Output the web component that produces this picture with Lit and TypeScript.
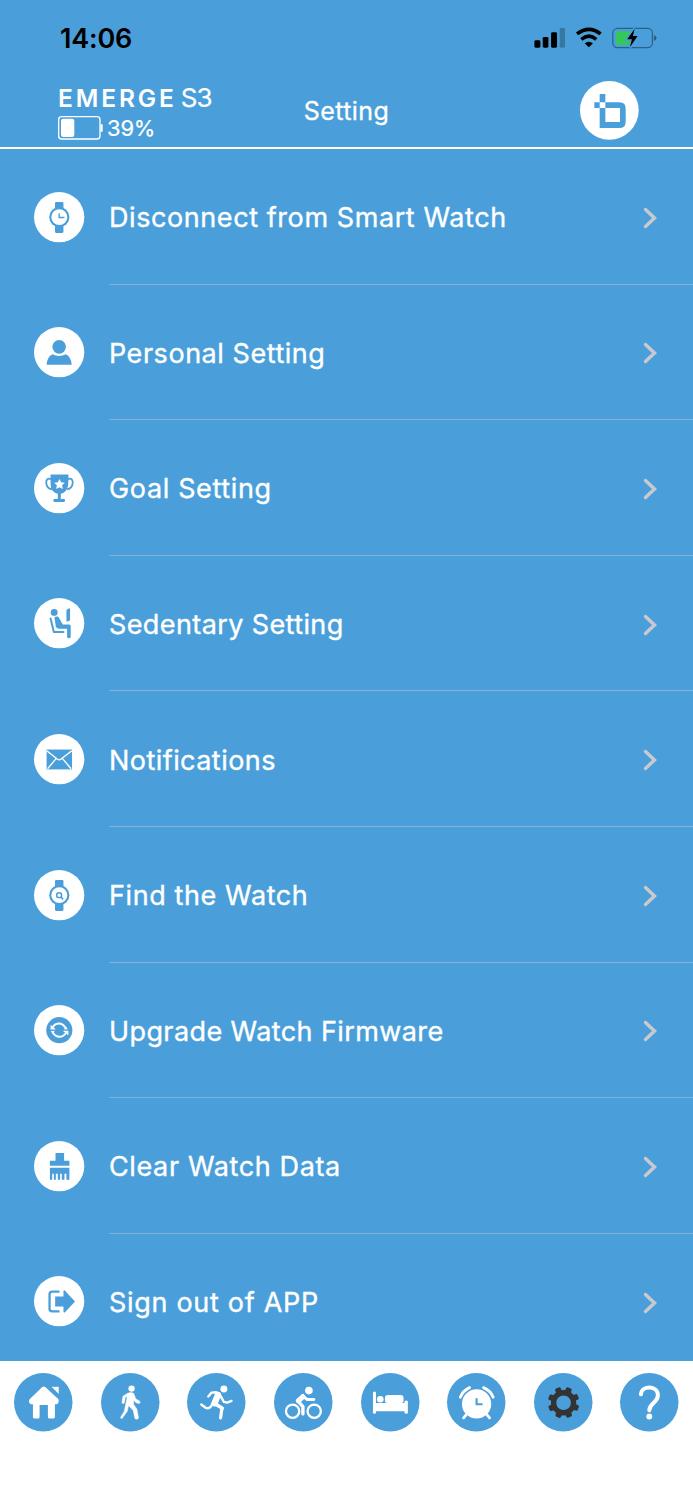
import { LitElement, html, svg, css, type SVGTemplateResult } from "lit";
import { customElement } from "lit/decorators.js";

const BLUE = "#4a9fda";

interface Row {
  label: string;
  tracking: number;
  box: string;
  art: SVGTemplateResult;
}

const watchBody = (cy: number) => svg`
  <rect x="103.500" y=${cy - 46} width="25.500" height="22" rx="3.500"/>
  <rect x="103.500" y=${cy + 26} width="25.500" height="22" rx="3.500"/>
  <circle cx="116.500" cy=${cy} r="30.500"/>
  <path d="M103.500 ${cy - 28}h25.500v56h-25.500z"/>
  <circle cx="116.500" cy=${cy} r="24" fill="#fff"/>`;

const rows: Row[] = [
  {
    label: "Disconnect from Smart Watch",
    tracking: 0.58,
    box: "40 33 152 152",
    art: svg`${watchBody(109)}
      <path d="M116 97v13h16" fill="none" stroke=${BLUE} stroke-width="4"/>`,
  },
  {
    label: "Personal Setting",
    tracking: 0.54,
    box: "40 440 152 152",
    art: svg`<circle cx="116" cy="500" r="20.500"/>
      <path d="M78 554c1-16 7-27 18-32q20 11 40 0c11 5 17 16 18 32z"/>`,
  },
  {
    label: "Goal Setting",
    tracking: 0.65,
    box: "40 37 152 152",
    art: svg`<path d="M90 72h54v7c0 22 0 33-9 43q-7 7-14 8v16h9q4 0 4 4.500t-4 4.500h-27q-5 0-5-4.500t5-4.500h9v-16q-8-1-14-8c-9-10-8-21-8-43z"/>
      <path d="M92 86c-10-5-16 1-15 12 1 10 6 17 17 19M142 86c10-5 16 1 15 12-1 10-6 17-17 19" fill="none" stroke=${BLUE} stroke-width="5.500"/>
      <path d="M117 85l4.800 10.200 11.200 1.500-8.200 7.700 2.200 11.200-10-5.500-10 5.500 2.200-11.200-8.200-7.700 11.200-1.500z" fill="#fff"/>`,
  },
  {
    label: "Sedentary Setting",
    tracking: 0.4,
    box: "40 444 152 152",
    art: svg`<circle cx="101" cy="487.500" r="10.500"/>
      <path d="M102 503q3-4 9-3 4 1 7 8l9 16h19q5 0 5 5v32q0 5-6 5-5 0-5-5v-24h-24q-7 0-10-6z"/>
      <path d="M90 506l10 41h29" fill="none" stroke=${BLUE} stroke-width="6" stroke-linecap="round" stroke-linejoin="round"/>
      <path d="M138 482q0-3 8-7l3 1v36l-11 4z"/>`,
  },
  {
    label: "Notifications",
    tracking: 0.45,
    box: "40 40 152 152",
    art: svg`<rect x="78" y="87" width="77" height="60"/>
      <path d="M79 91l32 25q5 4 10 0l33-25M81 145l27-32M152 145l-27-32" fill="none" stroke="#fff" stroke-width="4"/>`,
  },
  {
    label: "Find the Watch",
    tracking: 0.6,
    box: "40 447 152 152",
    art: svg`${watchBody(523)}
      <circle cx="116" cy="523" r="7.500" fill="none" stroke=${BLUE} stroke-width="4.500"/>
      <path d="M121 528l7 8" fill="none" stroke=${BLUE} stroke-width="5"/>`,
  },
  {
    label: "Upgrade Watch Firmware",
    tracking: 0.4,
    box: "40 44 152 152",
    art: svg`<circle cx="116.500" cy="120" r="39.500"/>
      <path d="M97 111c8-14 28-16 38 2M136 129c-8 14-29 16-39-2" fill="none" stroke="#fff" stroke-width="6"/>
      <path d="M90 104v14h16zM144 136v-14h-17zM142 117l-12 1 7-9zM90 123l13-1-6 9z" fill="#fff"/>`,
  },
  {
    label: "Clear Watch Data",
    tracking: 0.62,
    box: "40 450 152 152",
    art: svg`<path d="M105 486h26v24h16v15H88v-15h17zM88 531h59v36h-9v-18h-6v18h-8v-18h-5v18h-7v-18h-6v18h-6v-18h-5v18h-7z"/>`,
  },
  {
    label: "Sign out of APP",
    tracking: 0.7,
    box: "40 47 152 152",
    art: svg`<path d="M117 94H95q-8 0-8 8v44q0 8 8 8h22" fill="none" stroke=${BLUE} stroke-width="7"/>
      <path d="M104 109h25V92q1-3 4-1l31 33-31 33q-3 1-4-1v-17h-25z"/>`,
  },
];

const tooth = (a: number) =>
  svg`<rect x="650.500" y="93.500" width="18" height="24" rx="5" transform="rotate(${a} 660 141)"/>`;

const tabs: { box: string; name: string; art: SVGTemplateResult }[] = [
  {
    name: "Home",
    box: "42 52 176 176",
    art: svg`<path d="M127 94q5-3 9 0l39 36c4 6 0 16-6 16h-4v38q0 5-5 5h-11q-5 0-5-5v-36h-25v36q0 5-5 5h-10q-5 0-5-5v-38h-5c-6-1-9-10-5-15z"/>
      <path d="M156 94h20v20z" stroke="#fff" stroke-linejoin="round"/>`,
  },
  {
    name: "Walk",
    box: "302 52 176 176",
    art: svg`<circle cx="394" cy="99" r="9.500"/>
      <path d="M382 113q9-4 18 0l7 17 11 6q4 5-1 8-11-1-17-10v12l10 15 5 27q-5 5-11 1l-5-24-14-15-4 17-15 21q-5 3-5-3l11-18 8-38v-8l-5 5-3 17q-5 3-7-2l3-19z" stroke="#fff" stroke-width="1.500" stroke-linejoin="round"/>`,
  },
  {
    name: "Run",
    box: "562 52 176 176",
    art: svg`<circle cx="673" cy="100" r="10.500"/>
      <g fill="none" stroke="#fff" stroke-linecap="round" stroke-linejoin="round">
        <path d="M626 123l10-12 14-1 9 4 14 25 10 2 13-5" stroke-width="7"/>
        <path d="M655 118l-10 25" stroke-width="19"/>
        <path d="M644 143l24 15" stroke-width="11"/>
        <path d="M667 158l-4 29" stroke-width="9.500"/>
        <path d="M638 145c-4 12-12 14-19 12l-14-10" stroke-width="7.500"/>
      </g>`,
  },
  {
    name: "Cycle",
    box: "822 52 176 176",
    art: svg`<circle cx="927" cy="105" r="11.500"/>
      <g fill="none" stroke="#fff" stroke-linecap="round" stroke-linejoin="round">
        <circle cx="878" cy="167" r="20" stroke-width="7"/>
        <circle cx="943" cy="167" r="20" stroke-width="7"/>
        <path d="M908 120l14 12h20" stroke-width="9"/>
        <path d="M909 120l-16 15 16 18v22" stroke-width="10"/>
        <path d="M895 136l14-12" stroke-width="15"/>
      </g>`,
  },
  {
    name: "Sleep",
    box: "52 52 176 176",
    art: svg`<path d="M88 111q5-6 9 0v31h86v-5q5-4 10 0v36q-4 3-10 0v-6H97v6q-5 3-9 0z"/>
      <circle cx="110" cy="131" r="10"/>
      <rect x="124" y="118" width="56" height="25" rx="9"/>`,
  },
  {
    name: "Alarm",
    box: "312 52 176 176",
    art: svg`<circle cx="401" cy="145" r="44"/>
      <path d="M401 128v18h18" fill="none" stroke=${BLUE} stroke-width="6.500"/>
      <path d="M352 125q7-19 28-29M451 125q-7-19-29-29M370 177l-8 10M432 177l8 10" fill="none" stroke="#fff" stroke-width="8.500" stroke-linecap="round"/>`,
  },
  {
    name: "Setting",
    box: "571 52 176 176",
    art: svg`<g fill="#333">${[22.5, 67.5, 112.5, 157.5, 202.5, 247.5, 292.5, 337.5].map(tooth)}</g>
      <circle cx="660" cy="141.500" r="30" fill="none" stroke="#333" stroke-width="16"/>`,
  },
  {
    name: "Help",
    box: "832 52 176 176",
    art: svg`<path d="M895 116c2-28 51-28 51 3 0 23-24 21-26 45" fill="none" stroke="#fff" stroke-width="12" stroke-linecap="round"/>
      <circle cx="920" cy="183" r="9"/>`,
  },
];

@customElement("app-root")
export class AppRoot extends LitElement {
  static styles = css`
    :host {
      display: flex;
      flex-direction: column;
      width: 693px;
      height: 1500px;
      overflow: hidden;
      background: #fff;
      color: #fff;
      font-family: Inter, "Liberation Sans", sans-serif;
    }
    svg { display: block; overflow: visible; }
    .top {
      box-sizing: border-box;
      height: 149px;
      flex: none;
      background: #4a9fda;
      border-bottom: 2px solid #fff;
    }
    .status {
      height: 76px;
      box-sizing: border-box;
      display: flex;
      justify-content: space-between;
      align-items: center;
      padding: 0 34.500px 0 60px;
      color: #000;
    }
    .time { font-size: 27px; font-weight: 600; letter-spacing: -0.200px; }
    .signals { width: 125.300px; height: 23.300px; }
    .head {
      display: grid;
      grid-template-columns: 1fr auto 1fr;
      align-items: center;
      height: 69px;
      padding: 0 54.500px;
    }
    .brand { padding: 5px 0 0 3.500px; }
    .name { display: flex; align-items: baseline; gap: 4px; line-height: 30px; height: 30px; }
    .word { font-size: 24.500px; font-weight: 600; letter-spacing: 2.900px; }
    .model { font-size: 26px; letter-spacing: -1px; -webkit-text-stroke: 0.200px #fff; }
    .charge { display: flex; align-items: center; gap: 4px; height: 30px; font-size: 22px; letter-spacing: -0.200px; -webkit-text-stroke: 0.200px #fff; }
    .cell { width: 45px; height: 24px; }
    .title { font-size: 25px; letter-spacing: 0.400px; -webkit-text-stroke: 0.300px #fff; }
    .logo { justify-self: end; width: 58.700px; height: 58.700px; }
    .list { flex: none; height: 1211.500px; overflow: hidden; background: #4a9fda; }
    .row { display: flex; align-items: center; height: 135.600px; padding-left: 33.700px; }
    .badge { width: 50.300px; height: 50.300px; margin-right: 25px; flex: none; fill: #4a9fda; }
    .cellbody {
      flex: 1;
      box-sizing: border-box;
      height: 100%;
      display: flex;
      align-items: center;
      justify-content: space-between;
      padding: 3px 35.500px 0 0;
      border-bottom: 1px solid #86b1d3;
      font-size: 27px;
      white-space: nowrap;
      -webkit-text-stroke: 0.350px #fff;
    }
    .chev { width: 15px; height: 22px; }
    .tabs { flex: 1; display: grid; grid-template-columns: repeat(8, 1fr); justify-items: center; align-content: start; padding-top: 12px; }
    .tab { width: 58.500px; height: 58.500px; fill: #fff; }
  `;

  private badge(cls: string, box: string, art: SVGTemplateResult, disc: string) {
    const [x, y, w] = box.split(" ").map(Number);
    return html`<svg class=${cls} viewBox=${box}>
      <circle cx=${x + w / 2} cy=${y + w / 2} r=${w / 2} fill=${disc}></circle>${art}
    </svg>`;
  }

  render() {
    return html`
      <header class="top">
        <div class="status">
          <span class="time">14:06</span>
          <svg class="signals" viewBox="570 78 376 70">
            <rect x="574" y="121" width="18" height="22" rx="4"/>
            <rect x="599" y="111" width="17" height="32" rx="4"/>
            <rect x="624" y="97" width="18" height="46" rx="4"/>
            <rect x="650" y="84" width="16" height="59" rx="4" opacity=".25"/>
            <path d="M702 102q36-28 71 0M715 118q23-19 45 0" fill="none" stroke="#000" stroke-width="10.500"/>
            <path d="M725 130q12-10 25 0l-12.500 12z"/>
            <rect x="809.500" y="85" width="119" height="58" rx="14" fill="none" stroke="#2b5f84" stroke-width="3.500"/>
            <path d="M933 105q8 3 8 9t-8 9z" fill="#2b5f84"/>
            <rect x="819" y="94" width="46" height="41" rx="6" fill="#34c759"/>
            <path d="M875 86l-22 32h14l-6 24 23-34h-14z" stroke=${BLUE} stroke-width="9"/>
            <path d="M875 86l-22 32h14l-6 24 23-34h-14z"/>
          </svg>
        </div>
        <div class="head">
          <div class="brand">
            <div class="name"><span class="word">EMERGE</span><span class="model">S3</span></div>
            <div class="charge">
              <svg class="cell" viewBox="173 349 135 72" fill="#fff">
                <rect x="175" y="351" width="124" height="67" rx="9" fill="none" stroke="#fff" stroke-width="4"/>
                <rect x="182" y="357" width="40" height="55" rx="7"/>
                <rect x="300" y="374" width="7" height="22"/>
              </svg>
              <span>39%</span>
            </div>
          </div>
          <div class="title">Setting</div>
          <svg class="logo" viewBox="710 243 176 176">
            <circle cx="798" cy="331" r="88" fill="#fff"/>
            <path d="M769 282h17v25h-17zM753 307h16v17h-16zM786 307h42q19 0 19 19v39q0 19-19 19h-59v-60h17v42h44v-42h-44z" fill=${BLUE}/>
          </svg>
        </div>
      </header>
      <main class="list">
        ${rows.map(
          (r) => html`<div class="row">
            ${this.badge("badge", r.box, r.art, "#fff")}
            <div class="cellbody">
              <span style="letter-spacing:${r.tracking}px">${r.label}</span>
              <svg class="chev" viewBox="0 0 15 22">
                <path d="M2.500 2.500L11.500 11l-9 8.500" fill="none" stroke="#c9c9ce" stroke-width="3.400" stroke-linecap="round"/>
              </svg>
            </div>
          </div>`
        )}
      </main>
      <nav class="tabs">
        ${tabs.map((t) => this.badge("tab", t.box, t.art, BLUE))}
      </nav>
    `;
  }
}
